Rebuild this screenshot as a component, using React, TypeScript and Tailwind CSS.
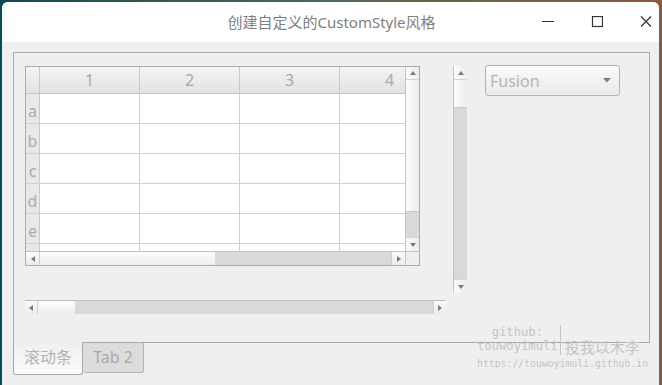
import React from "react"

const font = { fontFamily: '"Noto Sans", "Noto Sans CJK SC", sans-serif' }

function Arrow({ dir }: { dir: "up" | "down" | "left" | "right" }) {
  const pts = {
    up: "0,5 3,1 6,5",
    down: "0,1 3,5 6,1",
    left: "5,0 1,3 5,6",
    right: "1,0 5,3 1,6",
  }[dir]
  return (
    <svg width="6" height="6" viewBox="0 0 6 6">
      <polygon points={pts} fill="#7c7c7c" />
    </svg>
  )
}

const cols = ["1", "2", "3", "4"]
const rows = ["a", "b", "c", "d", "e", ""]

function Table() {
  return (
    <div className="flex w-[395px] h-[200px] flex-col border border-[#ababab] bg-white">
      <div className="flex h-[184px]">
        <div className="w-[379px] h-[184px] overflow-hidden">
          <div className="flex h-[27px] w-[500px] border-b border-[#c2c2c2] bg-gradient-to-b from-[#f4f4f4] to-[#e2e2e2]">
            <div className="w-[14px] border-r border-[#c9c9c9]" />
            {cols.map((c) => (
              <div
                key={c}
                className="flex w-[100px] shrink-0 items-center justify-center border-r border-[#c9c9c9] text-[16px] text-[#a9a9a9]"
              >
                {c}
              </div>
            ))}
          </div>
          {rows.map((r, i) => (
            <div key={i} className="flex h-[30px] w-[500px] border-b border-[#d0d0d0]">
              <div className="flex w-[14px] shrink-0 items-center justify-center border-r border-[#c9c9c9] bg-[#e8e8e8] pt-[4px] text-[16px] text-[#adadad]">
                {r}
              </div>
              {cols.map((c) => (
                <div key={c} className="w-[100px] shrink-0 border-r border-[#d0d0d0]" />
              ))}
            </div>
          ))}
        </div>
        <div className="flex w-[14px] flex-col border-l border-[#c3c3c3]">
          <div className="flex h-[13px] items-center justify-center border-b border-[#d4d4d4] bg-gradient-to-r from-[#fbfbfb] to-[#ececec]">
            <Arrow dir="up" />
          </div>
          <div className="h-[131px] bg-gradient-to-r from-[#fcfcfc] to-[#ededed]" />
          <div className="h-[26px] border-t border-[#c8c8c8] bg-[#d9d9d9]" />
          <div className="flex h-[14px] items-center justify-center border-t border-[#d4d4d4] bg-gradient-to-r from-[#fbfbfb] to-[#ececec]">
            <Arrow dir="down" />
          </div>
        </div>
      </div>
      <div className="flex h-[14px] border-t border-[#c3c3c3]">
        <div className="flex w-[14px] items-center justify-center border-r border-[#d0d0d0] bg-gradient-to-b from-[#fbfbfb] to-[#ececec]">
          <Arrow dir="left" />
        </div>
        <div className="w-[175px] bg-gradient-to-b from-[#fcfcfc] to-[#ededed]" />
        <div className="w-[176px] bg-[#d9d9d9]" />
        <div className="flex w-[14px] items-center justify-center border-l border-[#d0d0d0] bg-gradient-to-b from-[#fbfbfb] to-[#ececec]">
          <Arrow dir="right" />
        </div>
        <div className="w-[14px] border-l border-[#c3c3c3] bg-[#efefef]" />
      </div>
    </div>
  )
}

export default function App() {
  return (
    <div
      className="relative h-[385px] w-[662px] overflow-hidden bg-gradient-to-r from-[#0d4a50] via-[#4f6a55] to-[#8b5a3c]"
      style={font}
    >
      <div className="ml-[2px] mt-[2px] flex h-[383px] w-[657px] flex-col overflow-hidden rounded-t-[6px] bg-[#efefef]">
        <div className="relative flex h-[40px] shrink-0 items-center justify-center bg-white">
          <span className="ml-[2px] text-[15px] text-[#808080]">创建自定义的CustomStyle风格</span>
          <div className="absolute right-[7px] top-0 flex h-[40px] items-center gap-[37px]">
            <svg width="12" height="12" viewBox="0 0 12 12">
              <line x1="0" y1="5.5" x2="12" y2="5.5" stroke="#333" strokeWidth="1.2" />
            </svg>
            <svg width="12" height="12" viewBox="0 0 12 12">
              <rect x="1.5" y="0.5" width="10" height="10" fill="none" stroke="#333" strokeWidth="1.2" />
            </svg>
            <svg width="12" height="12" viewBox="0 0 12 12">
              <path d="M1 0.5 L11 10.5 M11 0.5 L1 10.5" stroke="#333" strokeWidth="1.2" />
            </svg>
          </div>
        </div>

        <div className="flex flex-col pl-[11px] pt-[10px]">
          <div className="flex h-[291px] w-[637px] border border-[#a9a9a9] pl-[11px] pt-[13px]">
            <div className="flex w-[421px] flex-col">
              <Table />
              <div className="mt-[34px] flex h-[14px] w-[421px] border-t border-[#bdbdbd]">
                <div className="flex w-[13px] items-center justify-center border-r border-[#cfcfcf] bg-gradient-to-b from-[#fbfbfb] to-[#ececec]">
                  <Arrow dir="left" />
                </div>
                <div className="w-[37px] bg-gradient-to-b from-[#fcfcfc] to-[#ededed]" />
                <div className="flex-1 bg-[#d9d9d9]" />
                <div className="flex w-[13px] items-center justify-center border-l border-[#cfcfcf] bg-gradient-to-b from-[#fbfbfb] to-[#ececec]">
                  <Arrow dir="right" />
                </div>
              </div>
            </div>
            <div className="ml-[7px] flex h-[227px] w-[14px] flex-col border-l border-[#c3c3c3]">
              <div className="flex h-[14px] items-center justify-center border-b border-[#d4d4d4] bg-gradient-to-r from-[#fbfbfb] to-[#ececec]">
                <Arrow dir="up" />
              </div>
              <div className="h-[27px] bg-gradient-to-r from-[#fcfcfc] to-[#ededed]" />
              <div className="flex-1 border-t border-[#cacaca] bg-[#d9d9d9]" />
              <div className="flex h-[14px] items-center justify-center border-t border-[#d4d4d4] bg-gradient-to-r from-[#fbfbfb] to-[#ececec]">
                <Arrow dir="down" />
              </div>
            </div>
            <div className="-mt-[1px] ml-[18px] flex h-[31px] w-[135px] items-center justify-between rounded-[3px] border border-[#b3b3b3] bg-gradient-to-b from-[#fbfbfb] to-[#e9e9e9] pl-[4px] pr-[8px]">
              <span className="text-[16px] text-[#b4b4b4]">Fusion</span>
              <svg width="8" height="5" viewBox="0 0 8 5">
                <polygon points="0,0 8,0 4,4.5" fill="#7d7d7d" />
              </svg>
            </div>
          </div>

          <div className="-mt-[1px] flex">
            <div className="flex h-[33px] w-[70px] items-center justify-center rounded-b-[3px] border border-t-0 border-[#a9a9a9] bg-gradient-to-b from-[#efefef] to-[#fbfbfb] pb-[2px] text-[16px] text-[#b2b2b2]">
              滚动条
            </div>
            <div className="mt-[1px] flex h-[30px] w-[61px] items-center justify-center rounded-b-[3px] border border-t-0 border-l-0 border-[#b4b4b4] bg-[#dcdcdc] pb-[1px] text-[16px] text-[#a9a9a9]">
              Tab 2
            </div>
          </div>
        </div>
      </div>

      <div className="pointer-events-none absolute left-[477px] top-[325px] text-[#c4c4c4]">
        <div className="flex">
          <div
            className="flex flex-col items-center text-[12.2px] leading-[14px]"
            style={{ fontFamily: '"DejaVu Sans Mono", monospace' }}
          >
            <span>github:</span>
            <span>touwoyimuli</span>
          </div>
          <div className="ml-[2px] w-px bg-[#c4c4c4]" />
          <div
            className="ml-[4px] mt-[14px] text-[15px] leading-[16px]"
            style={{ fontFamily: '"Noto Sans CJK SC", serif' }}
          >
            投我以木李
          </div>
        </div>
        <div
          className="mt-[3px] text-[9.8px] leading-[12px]"
          style={{ fontFamily: '"DejaVu Sans Mono", monospace' }}
        >
          https://touwoyimuli.github.io
        </div>
      </div>
    </div>
  )
}
